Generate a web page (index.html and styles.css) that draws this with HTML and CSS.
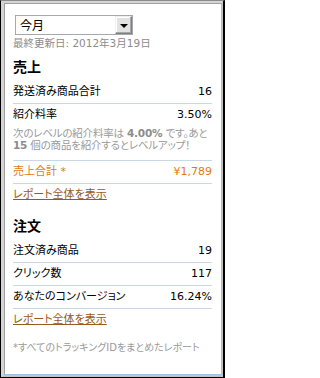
FILE: index.html
```html
<!DOCTYPE html>
<html lang="ja">
<head>
<meta charset="utf-8">
<title>レポート</title>
<link rel="stylesheet" href="styles.css">
</head>
<body>
<div class="frame">
  <div class="bevel">
    <div class="content">
      <div class="select">
        <span class="select-value">今月</span>
        <span class="select-btn"><span class="arrow"></span></span>
      </div>
      <p class="updated">最終更新日: 2012年3月19日</p>

      <h2 class="heading">売上</h2>
      <div class="row"><span>発送済み商品合計</span><span>16</span></div>
      <div class="row row-note">
        <div class="row-main"><span>紹介料率</span><span>3.50%</span></div>
        <p class="note">次のレベルの紹介料率は <b>4.00%</b> です。あと<br><b>15</b> 個の商品を紹介するとレベルアップ！</p>
      </div>
      <div class="row total"><span>売上合計 *</span><span>¥1,789</span></div>
      <a class="report" href="#">レポート全体を表示</a>

      <h2 class="heading heading-2">注文</h2>
      <div class="row"><span>注文済み商品</span><span>19</span></div>
      <div class="row"><span>クリック数</span><span>117</span></div>
      <div class="row"><span>あなたのコンバージョン</span><span>16.24%</span></div>
      <a class="report" href="#">レポート全体を表示</a>

      <p class="footnote">*すべてのトラッキングIDをまとめたレポート</p>
    </div>
  </div>
</div>
</body>
</html>
```

FILE: styles.css
```css
html, body {
  margin: 0;
  padding: 0;
  background: #fff;
}

body {
  font-family: "DejaVu Sans", "Noto Sans CJK JP", sans-serif;
  font-size: 11px;
  font-feature-settings: "palt";
  color: #000;
}

.frame {
  box-sizing: border-box;
  width: 225px;
  height: 378px;
  border-style: solid;
  border-width: 1px 2px 1px 1px;
  border-color: #8a8a8a #000 #000 #000;
  display: flex;
  overflow: hidden;
}

.bevel {
  flex: 1;
  min-width: 0;
  display: flex;
  border-style: solid;
  border-width: 2px 1px 2px 3px;
  border-color: #d4d4d4 #c4c4c4 #c4c4c4 #d4d4d4;
}

.content {
  flex: 1;
  min-width: 0;
  overflow: hidden;
  background: #fff;
  border-style: solid;
  border-width: 1px;
  border-color: #a0a0a0 #9fc0de #9fc0de #a0a0a0;
  padding: 11px 9px 0 8px;
  display: flex;
  flex-direction: column;
  align-items: stretch;
}

.select {
  box-sizing: border-box;
  width: 118px;
  height: 20px;
  margin-left: 2px;
  border: 1px solid #a5a9ae;
  display: flex;
  align-items: stretch;
  background: #fff;
}

.select-value {
  flex: 1;
  padding-left: 4px;
  font-size: 12px;
  line-height: 18px;
  font-family: "Noto Sans CJK JP", sans-serif;
}

.select-btn {
  box-sizing: border-box;
  width: 17px;
  border: 1px solid #7f7f7f;
  border-top-color: #f0f0f0;
  border-left-color: #f0f0f0;
  box-shadow: inset -1px -1px 0 #a8a8a8, inset 1px 1px 0 #ffffff;
  background: #e2e2e2;
  display: flex;
  align-items: center;
  justify-content: center;
}

.arrow {
  width: 0;
  height: 0;
  border-left: 4px solid transparent;
  border-right: 4px solid transparent;
  border-top: 4px solid #000;
  margin-top: 1px;
}

.updated {
  margin: 1px 0 0;
  font-size: 10.5px;
  line-height: 14px;
  color: #8c8c8c;
  white-space: nowrap;
}

.heading {
  margin: 9px 0 0;
  font-size: 14px;
  line-height: 16px;
  font-weight: bold;
}

.heading-2 {
  margin-top: 17px;
}

.row {
  display: flex;
  justify-content: space-between;
  padding: 4px 0 5px;
  line-height: 13px;
  border-bottom: 1px solid #c9d8e3;
  white-space: nowrap;
}

.heading + .row {
  margin-top: 6px;
}

.row-note {
  display: block;
  padding-bottom: 9px;
}

.row-main {
  display: flex;
  justify-content: space-between;
}

.note {
  margin: 6px 0 0;
  font-size: 10.5px;
  line-height: 12px;
  color: #9a9a9a;
  white-space: nowrap;
  letter-spacing: -0.2px;
}

.note b {
  color: #8c8c8c;
}

.total {
  color: #e47911;
}

.report {
  align-self: flex-start;
  margin-top: 4px;
  line-height: 13px;
  color: #96591e;
  text-decoration: underline;
}

.footnote {
  margin: 15px 0 0;
  font-size: 10px;
  line-height: 13px;
  color: #9a9a9a;
  white-space: nowrap;
}
```
